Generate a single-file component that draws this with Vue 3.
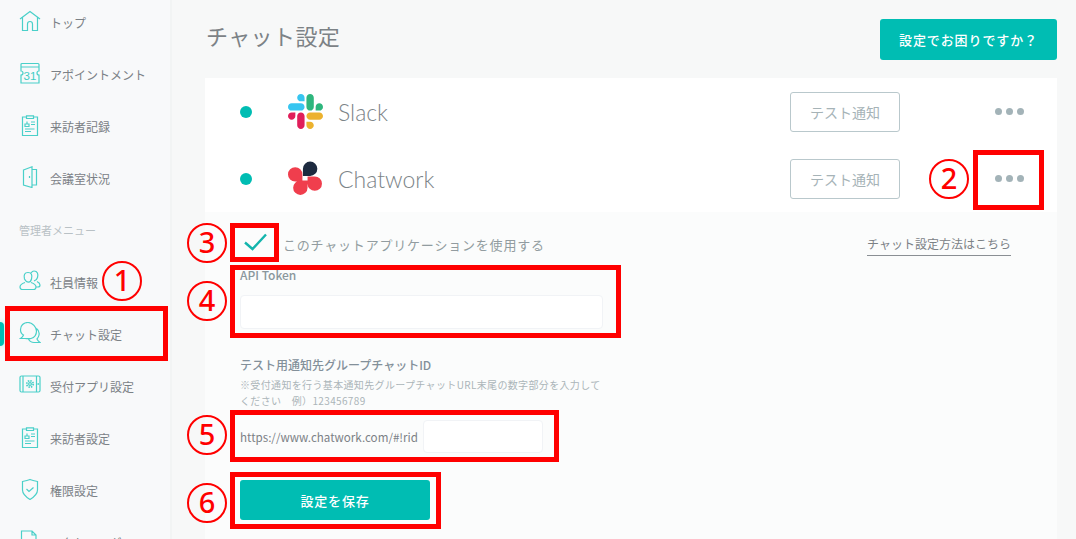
<script setup>
const chats = [
  { name: 'Slack', logo: 'slack' },
  { name: 'Chatwork', logo: 'chatwork' }
]
const marks = [1, 2, 3, 4, 5, 6]
</script>

<template>
  <div class="page">
    <aside class="sidebar">
      <a class="nav-item">
        <svg class="nav-icon" viewBox="0 0 22 22"><path d="M1 9 11 1.500 21 9M3.500 7.500V20.500H8.500V14a2.500 2.500 0 0 1 5 0v6.500h5V7.500" /></svg>
        <span>トップ</span>
      </a>
      <a class="nav-item">
        <svg class="nav-icon" viewBox="0 0 22 22">
          <path d="M2 5V2.500a1 1 0 0 1 1-1h16a1 1 0 0 1 1 1V5M1.500 5h19M2 5v4a2 2 0 0 1 0 4v8h18v-8a2 2 0 0 1 0-4V5" />
          <text x="11" y="17.500" class="cal-num">31</text>
        </svg>
        <span>アポイントメント</span>
      </a>
      <a class="nav-item">
        <svg class="nav-icon" viewBox="0 0 22 22"><path d="M7 3H3.500v18.500h15V3H15M7.500 1.800h7v2.700h-7zM8 7.500v2M6 12.500v-2.500h4v2.500zM12 8h4M12 10.500h4M6 15h9.500M6 17.500h6" /></svg>
        <span>来訪者記録</span>
      </a>
      <a class="nav-item">
        <svg class="nav-icon" viewBox="0 0 22 22"><path d="M4.500 4 13 .8v20.700l-8.500-2.500zM13 3.500h4.500v15.500H13M10.500 10v2" /></svg>
        <span>会議室状況</span>
      </a>
      <p class="nav-heading">管理者メニュー</p>
      <a class="nav-item">
        <svg class="nav-icon" viewBox="0 0 22 22"><path d="M5.500 9c-1-4 0-6.500 3.500-6.500S13.500 5 12.500 9s-4.500 4.500-7 0zM6 12.500C3 13.500 1 15 1 17c0 1.500 1 2.500 2.500 2.500h11c1.500 0 2.500-1 2.500-2.500 0-2-2-3.500-5-4.500M12 3c1-1.500 2-2 3-2 3.500 0 4.500 3 3.500 6.500-.5 2-2 3-3.500 3.500M18 11.500c2 1 3 2.500 3 3.500 0 1-.5 2-2 2h-2" /></svg>
        <span>社員情報</span>
      </a>
      <a class="nav-item is-active">
        <svg class="nav-icon" viewBox="0 0 22 22"><path d="M9 .5C4.500.5 1.500 3.500 1.500 7.500c0 2.500 1 4.500 3 5.500-.5 1.500-1.500 2.500-3 3.500H6c1.500 0 4 .5 6 0 3.500-1 5.500-4 5.500-7.500S13.500.5 9 .5zM17.500 6.500c2 1.500 3 4 2.500 6.500-.3 1.500-1 3-2 4 .5 1.200 1.500 2.500 3 3.500h-6c-2.500 0-4.500-1.500-5.500-3.500" /></svg>
        <span>チャット設定</span>
      </a>
      <a class="nav-item">
        <svg class="nav-icon" viewBox="0 0 22 22">
          <rect x="1" y="2" width="20" height="16" rx="1.500" />
          <path d="M4 2v16M17.500 2v16M19.200 9v2" />
          <circle class="gear" cx="11" cy="10" r="3.200" />
          <circle cx="11" cy="10" r="1.400" />
        </svg>
        <span>受付アプリ設定</span>
      </a>
      <a class="nav-item">
        <svg class="nav-icon" viewBox="0 0 22 22"><path d="M7 3H3.500v18.500h15V3H15M7.500 1.800h7v2.700h-7zM8 7.500v2M6 12.500v-2.500h4v2.500zM12 8h4M12 10.500h4M6 15h9.500M6 17.500h6" /></svg>
        <span>来訪者設定</span>
      </a>
      <a class="nav-item">
        <svg class="nav-icon" viewBox="0 0 22 22"><path d="M3.500 3.500C6 3 8.500 2.500 11 1.500c2.500 1 5 1.500 7.500 2V12c0 4-3.500 7-7.500 9.500C7 19 3.500 16 3.500 12zM7.500 11l2.500 2.500 4.500-4" /></svg>
        <span>権限設定</span>
      </a>
      <a class="nav-item">
        <svg class="nav-icon" viewBox="0 0 22 22"><path d="M2.500 21V1h10.500l4 4v16zM13 1v4h4" /></svg>
        <span>アクセスログ</span>
      </a>
    </aside>

    <main class="main">
      <header class="main-head">
        <h1 class="title">チャット設定</h1>
        <button class="help-btn">設定でお困りですか？</button>
      </header>

      <section class="card">
        <div v-for="chat in chats" :key="chat.name" class="chat-row">
          <span class="status-dot"></span>
          <svg v-if="chat.logo === 'slack'" class="chat-logo" viewBox="0 0 122.800 122.800">
            <path fill="#e01e5a" d="M25.800 77.600c0 7.100-5.800 12.900-12.900 12.900S0 84.700 0 77.600s5.800-12.900 12.900-12.900h12.900v12.900zM32.300 77.600c0-7.100 5.800-12.900 12.900-12.900s12.900 5.800 12.900 12.900v32.300c0 7.100-5.800 12.900-12.900 12.900s-12.900-5.800-12.900-12.900V77.600z" />
            <path fill="#36c5f0" d="M45.200 25.800c-7.100 0-12.900-5.800-12.900-12.900S38.100 0 45.200 0s12.900 5.800 12.900 12.900v12.900H45.200zM45.200 32.300c7.100 0 12.900 5.800 12.900 12.900s-5.800 12.900-12.900 12.900H12.900C5.800 58.100 0 52.300 0 45.200s5.800-12.900 12.900-12.900h32.300z" />
            <path fill="#2eb67d" d="M97 45.200c0-7.100 5.800-12.900 12.900-12.900s12.900 5.800 12.900 12.900-5.800 12.900-12.900 12.900H97V45.200zM90.500 45.200c0 7.100-5.800 12.900-12.900 12.900s-12.900-5.800-12.900-12.900V12.900C64.700 5.800 70.500 0 77.600 0s12.900 5.800 12.900 12.900v32.300z" />
            <path fill="#ecb22e" d="M77.600 97c7.100 0 12.900 5.800 12.900 12.900s-5.800 12.900-12.900 12.900-12.900-5.800-12.900-12.900V97h12.900zM77.600 90.500c-7.100 0-12.900-5.800-12.900-12.900s5.800-12.900 12.900-12.900h32.300c7.100 0 12.900 5.800 12.900 12.900s-5.800 12.900-12.900 12.900H77.600z" />
          </svg>
          <svg v-else class="chat-logo" viewBox="0 0 34 34">
            <path fill="#1d2a3f" d="M14.500 14.500v-7a7 7 0 1 1 7 7z" />
            <path fill="#f03e4d" d="M14 20H7a7 7 0 1 1 7-7zM19 15h7a7 7 0 1 1-7 7zM19 19v7a7 7 0 1 1-7-7z" />
          </svg>
          <span class="chat-name">{{ chat.name }}</span>
          <button class="test-btn">テスト通知</button>
          <span class="more"><i></i><i></i><i></i></span>
        </div>

        <form class="chat-form" @submit.prevent>
          <div class="use-row">
            <svg class="check" viewBox="0 0 24 18"><path d="M1.500 9.500 9 16 22.500 1.500" /></svg>
            <span class="use-label">このチャットアプリケーションを使用する</span>
            <a class="guide-link">チャット設定方法はこちら</a>
          </div>
          <label class="token-label">API Token</label>
          <input class="token-input" type="text" />
          <h2 class="group-title">テスト用通知先グループチャットID</h2>
          <p class="group-note">※受付通知を行う基本通知先グループチャットURL末尾の数字部分を入力して<br />ください　例）123456789</p>
          <div class="url-row">
            <span class="url-text">https://www.chatwork.com/#!rid</span>
            <input class="rid-input" type="text" />
          </div>
          <button class="save-btn">設定を保存</button>
        </form>
      </section>
    </main>

    <!-- 説明用の赤枠と番号 -->
    <div v-for="n in marks" :key="'box' + n" class="red-box" :class="'box-' + n"></div>
    <span v-for="n in marks" :key="'num' + n" class="red-num" :class="'num-' + n">{{ n }}</span>
  </div>
</template>

<style>
html, body {
  margin: 0;
  background: #f7f8f8;
}
</style>

<style scoped>
.page {
  position: relative;
  display: flex;
  width: 1076px;
  height: 539px;
  overflow: hidden;
  background: #f7f8f8;
  font-family: "Noto Sans CJK JP", "Noto Sans", sans-serif;
}

.sidebar {
  flex: none;
  box-sizing: border-box;
  width: 172px;
  margin-top: -4px;
  border-right: 2px solid #f2f4f4;
  background: #f8f9fa;
}

.nav-item {
  position: relative;
  display: flex;
  align-items: center;
  gap: 9px;
  height: 52px;
  padding-left: 19px;
  color: #7b8186;
  font-size: 12px;
  white-space: nowrap;
}

.nav-icon {
  flex: none;
  width: 22px;
  height: 22px;
  margin-top: -2px;
  fill: none;
  stroke: #4ad0c9;
  stroke-width: 1.200;
}

.gear {
  stroke-width: 1.800;
  stroke-dasharray: 1.500 1;
}

.cal-num {
  fill: #3fccc5;
  stroke: none;
  font-family: "Liberation Sans", sans-serif;
  font-size: 11.500px;
  text-anchor: middle;
}

.is-active::before {
  content: "";
  position: absolute;
  left: 0;
  top: 14px;
  width: 4px;
  height: 24px;
  border-radius: 0 12px 12px 0;
  background: #00bdb3;
  box-shadow: 0 0 6px #7fe0da;
}

.nav-heading {
  display: flex;
  align-items: center;
  height: 52px;
  margin: 0;
  padding-left: 19px;
  color: #b9c1c5;
  font-size: 11px;
}

.main {
  flex: none;
  width: 852px;
  margin-left: 33px;
}

.main-head {
  display: flex;
  align-items: center;
  justify-content: space-between;
  height: 78px;
  padding-top: 1px;
  box-sizing: border-box;
}

.title {
  margin: 0 0 10px 1px;
  color: #7c8286;
  font-size: 22px;
  font-weight: 400;
  letter-spacing: 0.4px;
}

.help-btn {
  width: 177px;
  height: 41px;
  border: none;
  border-radius: 3px;
  background: #00bdb3;
  color: #fff;
  font-family: inherit;
  font-size: 13px;
  font-weight: 500;
  letter-spacing: 0.9px;
}

.card {
  height: 480px;
  border-radius: 3px 3px 0 0;
  background: #fbfcfc;
}

.chat-row {
  display: flex;
  align-items: center;
  height: 67px;
  padding-left: 35px;
  background: #fff;
}

.status-dot {
  flex: none;
  width: 12px;
  height: 12px;
  border-radius: 50%;
  background: #00bdb3;
}

.chat-logo {
  flex: none;
  width: 35px;
  height: 35px;
  margin-left: 36px;
}

.chat-name {
  width: 451px;
  margin-left: 15px;
  color: #7c8488;
  font-family: Lato, sans-serif;
  font-size: 23px;
  font-weight: 300;
}

.test-btn {
  flex: none;
  box-sizing: border-box;
  width: 110px;
  height: 40px;
  margin-left: 1px;
  border: 1px solid #b9c8cc;
  border-radius: 3px;
  background: #fff;
  color: #a6b3b7;
  font-family: inherit;
  font-size: 14px;
}

.more {
  display: flex;
  gap: 4px;
  margin-left: 95px;
}

.more i {
  width: 7px;
  height: 7px;
  border-radius: 50%;
  background: #a3b3b8;
}

.chat-form {
  display: flex;
  flex-direction: column;
  align-items: flex-start;
  padding-left: 35px;
}

.use-row {
  display: flex;
  align-items: center;
  width: 771px;
  height: 41px;
  margin-top: 12px;
  box-sizing: border-box;
  padding-left: 3px;
}

.check {
  flex: none;
  width: 25px;
  height: 18px;
  margin-top: -5px;
  fill: none;
  stroke: #14b5ad;
  stroke-width: 2.400;
}

.use-label {
  margin-left: 15px;
  color: #929ca0;
  font-size: 13px;
  letter-spacing: 0.8px;
}

.guide-link {
  margin-top: 1px;
  margin-left: auto;
  padding-bottom: 3px;
  border-bottom: 1px solid #8a8f94;
  color: #7b8186;
  font-size: 12px;
  line-height: 17px;
}

.token-label {
  margin-top: 1px;
  color: #8a979d;
  font-size: 12px;
  font-weight: 500;
  line-height: 18px;
}

.token-input {
  box-sizing: border-box;
  width: 363px;
  height: 34px;
  margin-top: 11px;
  border: 1px solid #f1f3f6;
  border-radius: 4px;
  background: #fff;
}

.group-title {
  margin: 27px 0 0;
  color: #83909a;
  font-size: 12px;
  font-weight: 500;
  line-height: 18px;
}

.group-note {
  width: 372px;
  margin: 3px 0 0;
  color: #abb5b9;
  font-size: 10px;
  letter-spacing: 0.35px;
  line-height: 16px;
}

.url-row {
  display: flex;
  align-items: center;
  margin-top: 11px;
  color: #7b8186;
  font-size: 11.600px;
}

.url-text {
  width: 183px;
}

.rid-input {
  box-sizing: border-box;
  width: 120px;
  height: 33px;
  border: 1px solid #f1f3f6;
  border-radius: 4px;
  background: #fff;
}

.save-btn {
  width: 190px;
  height: 40px;
  margin-top: 27px;
  border: none;
  border-radius: 3px;
  background: #00bdb3;
  color: #fff;
  font-family: inherit;
  font-size: 13px;
  font-weight: 500;
  letter-spacing: 0.8px;
}

.red-box {
  position: absolute;
  box-sizing: border-box;
  border: 5px solid #f00;
}

.box-1 { left: 5px; top: 306px; width: 163px; height: 55px; }
.box-2 { left: 973px; top: 150px; width: 71px; height: 60px; }
.box-3 { left: 230px; top: 223px; width: 49px; height: 39px; }
.box-4 { left: 230px; top: 265px; width: 391px; height: 73px; }
.box-5 { left: 230px; top: 410px; width: 329px; height: 52px; }
.box-6 { left: 230px; top: 472px; width: 211px; height: 57px; }

.red-num {
  position: absolute;
  box-sizing: border-box;
  width: 40px;
  height: 40px;
  border: 2.500px solid #f00;
  border-radius: 50%;
  color: #f00;
  font-family: "Noto Sans", sans-serif;
  font-size: 29px;
  font-weight: 500;
  line-height: 34px;
  text-align: center;
}

.num-1 { left: 102px; top: 261px; }
.num-2 { left: 929px; top: 159px; }
.num-3 { left: 187px; top: 223px; }
.num-4 { left: 187px; top: 281px; }
.num-5 { left: 187px; top: 415px; }
.num-6 { left: 187px; top: 483px; }
</style>
